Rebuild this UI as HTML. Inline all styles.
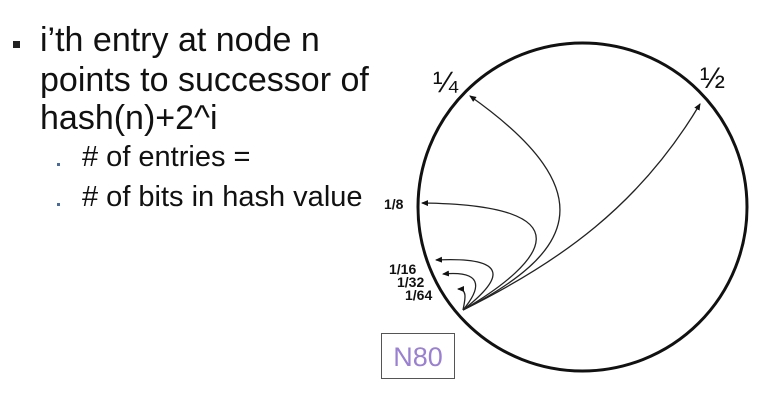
<!DOCTYPE html>
<html><head><meta charset="utf-8"><style>
html,body{margin:0;padding:0;background:#fff;}
body{width:763px;height:400px;position:relative;overflow:hidden;font-family:"Liberation Sans",Arial,sans-serif;color:#111;}
.t{position:absolute;white-space:nowrap;line-height:1;}
.l1{font-size:34px;left:40px;}
.l2{font-size:29px;left:82px;}
</style></head><body>
<div style="position:absolute;left:13px;top:41px;width:7px;height:7px;background:#222"></div>
<div class="t l1" style="top:23px">i’th entry at node n</div>
<div class="t l1" style="top:63px">points to successor of</div>
<div class="t l1" style="top:101px">hash(n)+2^i</div>
<div style="position:absolute;left:57px;top:163px;width:3px;height:3px;background:#4a6a9a"></div>
<div style="position:absolute;left:57px;top:203px;width:3px;height:3px;background:#4a6a9a"></div>
<div class="t l2" style="top:143px">#&nbsp;of entries =</div>
<div class="t l2" style="top:183px">#&nbsp;of bits in hash value</div>
<svg width="763" height="400" style="position:absolute;left:0;top:0">
<defs><marker id="a" markerWidth="8" markerHeight="8" refX="6" refY="3" orient="auto" markerUnits="userSpaceOnUse"><path d="M0,0 L7,3 L0,6 z" fill="#111"/></marker></defs>
<ellipse cx="582.5" cy="207" rx="164.5" ry="164" fill="none" stroke="#111" stroke-width="3"/>
<g fill="none" stroke="#222" stroke-width="1.3" marker-end="url(#a)">
<path d="M463,310 C570,255 610,195 470,96"/>
<path d="M463,310 C560,262 640,205 700,104"/>
<path d="M463,310 C545,262 590,205 422,203"/>
<path d="M463,310 C495,285 520,256 436,260"/>
<path d="M463,310 C478,292 488,270 443,274"/>
<path d="M463,310 C465,300 468,289 458,289"/>
</g>
<g font-family="Liberation Sans,Arial,sans-serif" fill="#111">
<text x="433" y="92" font-size="30">¼</text>
<text x="700" y="88" font-size="30">½</text>
<g font-size="14" font-weight="bold">
<text x="384" y="209">1/8</text>
<text x="389" y="274">1/16</text>
<text x="397" y="287">1/32</text>
<text x="405" y="300">1/64</text>
</g>
</g>
<rect x="381.5" y="333.5" width="73" height="45" fill="#fff" stroke="#555" stroke-width="1"/>
<text x="418" y="366" font-size="27" text-anchor="middle" fill="#9a80d0" font-family="Liberation Sans,Arial,sans-serif">N80</text>
</svg>
</body></html>
